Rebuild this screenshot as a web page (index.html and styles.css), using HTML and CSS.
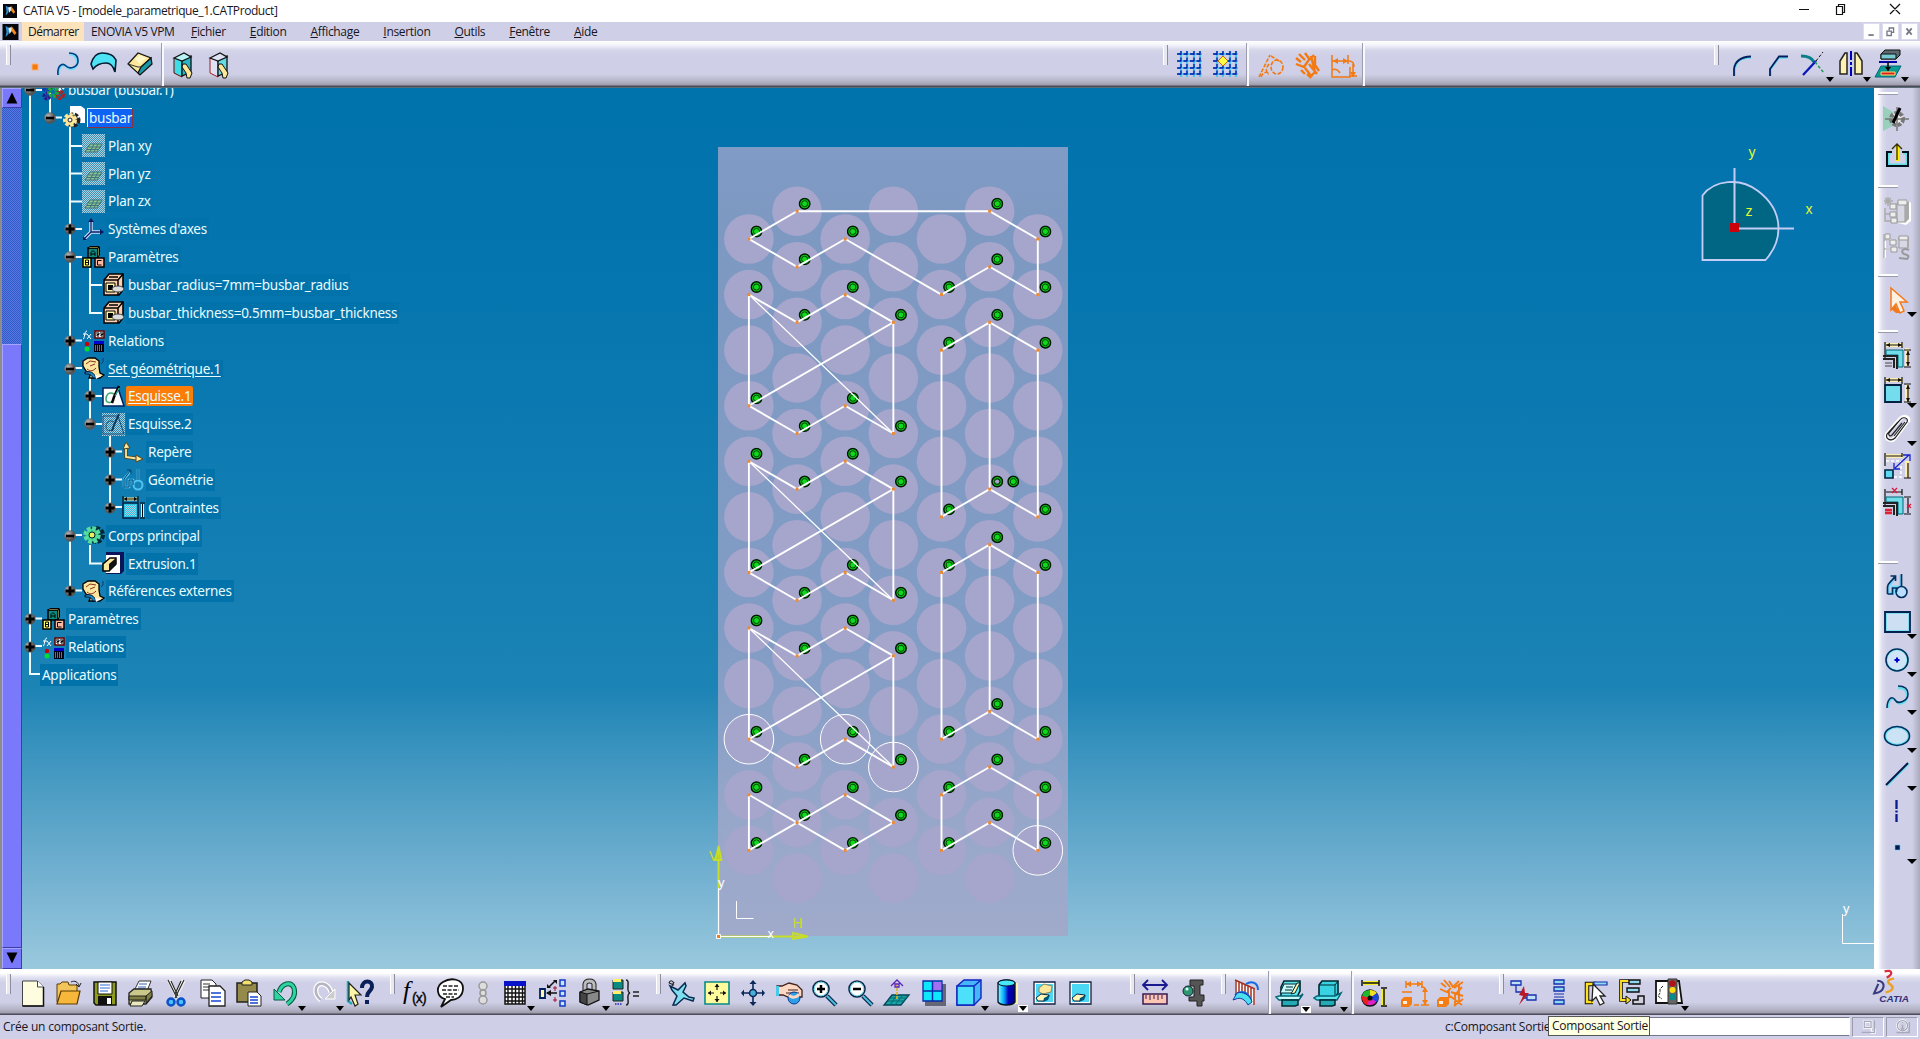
FILE: index.html
```html
<!DOCTYPE html>
<html lang="fr">
<head>
<meta charset="utf-8">
<title>CATIA V5 - [modele_parametrique_1.CATProduct]</title>
<link rel="stylesheet" href="styles.css">
</head>
<body>
<svg class="defs" aria-hidden="true">
  <defs>
    <pattern id="dither" width="2" height="2" patternUnits="userSpaceOnUse"><path d="M0 0h1v1H0zM1 1h1v1H1z" fill="#a9cfe0"/></pattern>
    <linearGradient id="blue" x1="0" x2="1"><stop offset="0" stop-color="#8ff"/><stop offset=".35" stop-color="#0af"/><stop offset=".6" stop-color="#00b"/><stop offset="1" stop-color="#008"/></linearGradient>
    <radialGradient id="ball" cx=".35" cy=".35"><stop offset="0" stop-color="#bbb"/><stop offset="1" stop-color="#555"/></radialGradient>
    <symbol id="logo" viewBox="0 0 16 16"><path fill="#05070d" d="M0 0h16v16H0z"/><path fill="#2d8fd0" d="M3 2l4 2-1 6-3 3 1-5z"/><path fill="#e8f0f0" d="M6 4l3-1 1 3-3 4z"/><path fill="#f08a20" d="M9 2l3 4 2 3-2 2-3-4z"/></symbol>
    <symbol id="minus" viewBox="0 0 12 12"><circle cx="6" cy="6" r="5.8" fill="url(#ball)"/><path d="M2 6h8" stroke="#000" stroke-width="2.6"/></symbol>
    <symbol id="plus" viewBox="0 0 12 12"><circle cx="6" cy="6" r="5.6" fill="url(#ball)"/><path d="M1.500 6h9M6 1.500v9" stroke="#000" stroke-width="2.800"/></symbol>
    <symbol id="plan" viewBox="0 0 23 23"><path fill="#3f93b0" d="M0 0h23v23H0z"/><path fill="url(#dither)" d="M0 0h23v23H0z"/><path fill="#86c795" stroke="#41707c" d="M8 10h12l-5 8H3z"/><path stroke="#41707c" d="M7 13h12M5 15.500h12M12 10l-4 8M16 10l-4 8"/></symbol>
    <symbol id="axes" viewBox="0 0 23 23"><path d="M9 2v12h11M9 14l-7 7" fill="none" stroke="#cfe6ff" stroke-width="3.400"/><path d="M9 2v12h12M9 14l-7 7" fill="none" stroke="#0a1a60" stroke-width="1.300"/><path fill="#0a1a60" d="M6 4l3-4 3 4zM18 11l4 3-4 3zM1 18v4h4z"/></symbol>
    <symbol id="blocks" viewBox="0 0 23 23"><path fill="#0a8a80" stroke="#000" stroke-width="1.500" d="M6 2h10v10H6z"/><path fill="#fe8" stroke="#000" d="M6 2l2-1.500h9L16 2zM16 2v9l1.500-2v-8z"/><path fill="#ff6" stroke="#000" stroke-width="1.500" d="M1 12h8v9H1z"/><path fill="#fcb9a0" stroke="#000" stroke-width="1.500" d="M13 12h9v9h-9z"/><path d="M9 10V6.500l2-2 2 2V10M9 8h4M3.500 14v5h3v-5zM3.500 16.500h3M19.500 14.500h-4V19h4" fill="none" stroke="#000"/></symbol>
    <symbol id="param" viewBox="0 0 23 23"><path fill="#fbd0b0" stroke="#000" stroke-width="1.600" d="M2 7l5-6h14v16l-4 5H2z"/><path d="M2 7h14v15M16 7l5-6M7 4h9" fill="none" stroke="#000" stroke-width="1.500"/><path fill="#fff6a0" stroke="#000" d="M4 10h9v9H4z"/><path fill="#000" d="M6 12h5v5H6z"/><ellipse cx="16" cy="16" rx="6" ry="3" fill="#ddd" stroke="#444"/></symbol>
    <symbol id="rel" viewBox="0 0 23 23"><path fill="none" stroke="#fff" d="M1 10c2 0 1-8 4-8M1 5h4M5 5l4 5M9 5l-4 5"/><path fill="#f7f3f3" stroke="#600" stroke-width="1.500" d="M13 2h9v7h-9z"/><path d="M14 4h3v1.500h-2V7h2M18 4h3v1.500h-2V7h2" stroke="#000" fill="none"/><circle cx="5" cy="15" r="2.200" fill="#c00"/><circle cx="5" cy="20" r="2.500" fill="#0d3"/><path fill="#00c" d="M12 12h10v3H12z"/><path fill="#001" d="M12 15h10v8H12z"/><path d="M13 17h8M13 19h8M13 21h8" stroke="#cde" stroke-dasharray="1 1"/></symbol>
    <symbol id="gset" viewBox="0 0 23 23"><path fill="#fbe6a0" stroke="#000" stroke-width="1.300" d="M1 4l5-3h7l4 3v6l1 6 4 2-4 3H7l2-5-5-2-3-5z"/><path d="M4 7l4-3 6 1M8 9l5-2M5 12c4 3 6 2 9-1" fill="none" stroke="#8a3020"/><path fill="#1a8ac0" stroke="#013" d="M3 15c5-1 9 0 11 6h-3c-2-4-4-4-8-4z"/><path d="M21 1v4l-2 2" stroke="#0a3a80" fill="none"/><path fill="#fff" d="M13 18l6 1-5 3z"/></symbol>
    <symbol id="sketch" viewBox="0 0 23 23"><path fill="#fff" stroke="#012060" stroke-width="1.500" d="M1 3h15l6 18H1z"/><path fill="none" stroke="#4a7" stroke-width="1.500" d="M12 9c-5-3-8 1-8 5s5 5 8 1"/><path d="M17 1l-5 11-2 6" stroke="#000" stroke-width="2.500" fill="none"/><path d="M17 3l-4 8" stroke="#3ca" stroke-width="1"/></symbol>
    <symbol id="profile" viewBox="0 0 23 26"><path fill="none" stroke="#7df" stroke-width="3" d="M3 20v-6l5-8M3 20h5v-6h4v5M15 2v12"/><circle cx="16" cy="19" r="5.500" fill="#bdf" stroke="#013060" stroke-width="1.600"/><path fill="none" stroke="#013060" stroke-width="1.700" d="M2 21v-7c0-4 4-5 7-10M5 3h5v5M2 21h5v-6h4v4M16 1v12"/></symbol>
    <symbol id="dims" viewBox="0 0 23 23"><path fill="#2fbfe0" stroke="#001a40" stroke-width="1.500" d="M1 7h15v15H1z"/><path fill="url(#dither)" d="M3 9h11v11H3z"/><path d="M2 3h13M20.500 8v13" stroke="#fe9" stroke-width="3"/><path d="M1 0v6M16 0v6M2 3h13M18 7h5M18 22h5M20.500 8v13" stroke="#000"/><path d="M5 1L2 3l3 2M12 1l3 2-3 2" fill="#000"/></symbol>
    <symbol id="node" viewBox="0 0 12 12"><circle cx="6" cy="6" r="5" fill="#0ac414" stroke="#001800" stroke-width="1.400"/><circle cx="6" cy="6" r="2.900" fill="#10d81c" stroke="#053a08" stroke-width=".9"/></symbol>
  </defs>
</svg>

<header class="titlebar">
  <svg class="applogo"><use href="#logo"/></svg>
  <span class="title">CATIA V5 - [modele_parametrique_1.CATProduct]</span>
  <svg class="winbtns" viewBox="0 0 110 22"><path d="M1 9.500h10M38.500 6.500h6v8h-6zM40.500 6V4.500h6v8h-2M92 4l10 10M102 4L92 14" fill="none" stroke="#111" stroke-width="1.200"/></svg>
</header>

<nav class="menubar">
  <svg class="menulogo"><use href="#logo"/></svg>
  <span class="menu active">Démarrer</span>
  <span class="menu enovia">ENOVIA V5 VPM</span>
  <span class="menu"><u>F</u>ichier</span>
  <span class="menu"><u>E</u>dition</span>
  <span class="menu"><u>A</u>ffichage</span>
  <span class="menu"><u>I</u>nsertion</span>
  <span class="menu"><u>O</u>utils</span>
  <span class="menu"><u>F</u>enêtre</span>
  <span class="menu"><u>A</u>ide</span>
  <span class="docbtns">
    <svg viewBox="0 0 17 17"><path d="M5 12.500h6" stroke="#778" stroke-width="2"/></svg>
    <svg viewBox="0 0 17 17"><path d="M4.500 8h5v5h-5zM7 7V4.500h5v5h-2" fill="none" stroke="#778" stroke-width="1.500"/></svg>
    <svg viewBox="0 0 17 17"><path d="M5 5l6 7M11 5l-6 7" stroke="#778" stroke-width="2"/></svg>
  </span>
</nav>

<div class="toolbar top">
  <div class="group grip lead">
    <i class="tool"><svg viewBox="0 0 30 30"><path fill="#f47a10" stroke="#fbb070" d="M12 15h6v6h-6z"/></svg></i>
    <i class="tool m2"><svg viewBox="0 0 30 30"><path fill="none" stroke="#7df" stroke-width="2.500" d="M6 26c-1-9 4-12 8-8s11 1 10-5-3-8-8-8"/><path fill="none" stroke="#014080" stroke-width="1.600" d="M5 26c-1-9 4-13 8-9s12 1 12-5-4-8-9-8"/></svg></i>
    <i class="tool"><svg viewBox="0 0 30 30"><path fill="#4de3f5" stroke="#001a30" stroke-width="1.600" d="M2 15C4 8 7 4 13 4s12 2 14 7l-1 12c-2-7-5-9-9-9s-9 1-13 6z"/></svg></i>
    <i class="tool"><svg viewBox="0 0 30 30"><path fill="#fde79a" stroke="#111" stroke-width="1.200" d="M3 15L13 4l13 5-10 9-2 7z"/><path fill="#fff8c8" d="M10 10l5-4 6 3-6 6z"/><path fill="#1b98a8" stroke="#111" stroke-width="1.200" d="M16 18L26 9l1 6-12 11-2-2z"/><path d="M3 15l10 3 3 0" fill="none" stroke="#333"/></svg></i>
  </div>
  <div class="group sep">
    <i class="tool"><svg viewBox="0 0 30 30"><path fill="#3fdbe6" stroke="#700" d="M6 8v15l8 4V10z"/><path fill="#2ab5c5" stroke="#111" stroke-width="1.300" d="M14 10v16l9-4V6z"/><path fill="#b8f4f8" stroke="#111" stroke-width="1.300" d="M6 8l10-5 7 4-9 4z"/><path fill="#fde79a" stroke="#111" d="M15 14l3 0 6 9-2 5-3 0-1-5-4-6z"/></svg></i>
    <i class="tool"><svg viewBox="0 0 30 30"><path fill="#dfe2f4" stroke="#a02020" d="M6 8v15l8 4V10z"/><path fill="#65dbe5" stroke="#111" stroke-width="1.300" d="M14 10v16l9-4V6z"/><path fill="#dfe2f4" stroke="#111" stroke-width="1.300" d="M6 8l10-5 7 4-9 4z"/><path fill="#fde79a" stroke="#111" d="M15 14l3 0 6 9-2 5-3 0-1-5-4-6z"/></svg></i>
  </div>
  <div class="group grip gridset">
    <i class="tool"><svg viewBox="0 0 30 30"><path d="M3 5h24M3 12h24M3 19h24M3 25h24M6 2v26M12 2v26M19 2v26M25 2v26" stroke="#52c5ee" stroke-width="2.200"/><path d="M2 5h26M2 12h26M2 19h26M2 25h26M6 2v26M12 2v26M19 2v26M25 2v26" stroke="#0614a8" stroke-width="1.300" stroke-dasharray="4 2.500"/></svg></i>
    <i class="tool"><svg viewBox="0 0 30 30"><path d="M3 5h24M3 12h24M3 19h24M3 25h24M6 2v26M12 2v26M19 2v26M25 2v26" stroke="#52c5ee" stroke-width="2.200"/><path d="M2 5h26M2 12h26M2 19h26M2 25h26M6 2v26M12 2v26M19 2v26M25 2v26" stroke="#0614a8" stroke-width="1.300" stroke-dasharray="4 2.500"/><path fill="#ff4" stroke="#c60" d="M12 7l5 5-5 5-5-5z"/></svg></i>
  </div>
  <div class="group sep orange">
    <i class="tool"><svg viewBox="0 0 30 30"><g fill="none" stroke="#f37a12" stroke-width="1.600" stroke-dasharray="4 1.500"><path d="M2 27L13 5M14 6l8 5"/><ellipse cx="20" cy="17" rx="6" ry="7"/><path d="M4 27c2-5 6-6 8-3M12 14c-4 5-3 9 0 10"/></g></svg></i>
    <i class="tool"><svg viewBox="0 0 30 30"><path d="M3 8l5 4M6 4l6 6M12 3l5 7M3 14l8 3 4-6 6-6M8 20l4 4M12 18l7 9M16 14l8 10M20 12l6 9M22 6v8M14 24l4 4M18 6l4 16-5 5" fill="none" stroke="#f37a12" stroke-width="2.400"/></svg></i>
    <i class="tool m1"><svg viewBox="0 0 30 30"><path d="M4 5v22h18V17M4 20c4-2 6 0 8 3M4 11h17M20 5v9M25 12v15M21 26h8M21 11c4 0 5 3 5 6" fill="none" stroke="#f37a12" stroke-width="1.500"/><path fill="#f37a12" d="M5 11l5-3v6zM20 11l-5-3v6zM25 27l-3-5h6z"/></svg></i>
  </div>
  <div class="group sep empty"></div>
  <div class="group grip ops">
    <i class="tool"><svg viewBox="0 0 30 30"><path d="M7 27V21C8 13 12 9 23 9" fill="none" stroke="#6de" stroke-width="1.500"/><path d="M6 27V20C7 12 12 8 23 7.500" fill="none" stroke="#012060" stroke-width="1.800"/></svg></i>
    <i class="tool"><svg viewBox="0 0 30 30"><path d="M7 27V20L15 9h8" fill="none" stroke="#6de" stroke-width="1.500"/><path d="M6 27V20L15 7.500h9" fill="none" stroke="#012060" stroke-width="1.800"/></svg></i>
    <i class="tool drop m1"><svg viewBox="0 0 30 30"><path d="M2 7c6 0 11 2 13 6" fill="none" stroke="#087f88" stroke-width="3"/><path d="M4 26L17 12" stroke="#0818b8" stroke-width="2.300"/><path d="M17 12l7-9" stroke="#111" stroke-dasharray="3 2"/><path d="M16 13l9 11" stroke="#295" stroke-width="1.500" stroke-dasharray="3 2"/></svg></i>
    <i class="tool drop p1"><svg viewBox="0 0 30 30"><path d="M4 25V12l5-8h2v21zM26 25V12l-5-8h-2v21z" fill="#fdf2b0" stroke="#222" stroke-width="1.500"/><path d="M15 2v26" stroke="#00b" stroke-width="2" stroke-dasharray="9 2 3 2"/></svg></i>
    <i class="tool drop p2"><svg viewBox="0 0 30 30"><path fill="#5d6b70" stroke="#111" d="M7 5l4-4h15v5l-4 4H7z"/><path fill="#78c8d0" stroke="#111" d="M7 5h15v5H7z"/><path d="M5 13h18" stroke="#00a" stroke-width="2"/><path fill="#0a9a94" stroke="#067" d="M7 17h20l-6 11H1z"/><path d="M14 13v9" stroke="#000" stroke-width="1.500"/><path fill="#000" d="M11 18h6l-3 4z"/><path fill="#d22" stroke="#fd6" d="M7 23h14v3H7z"/></svg></i>
  </div>
</div>

<main class="work">
  <div class="scroll">
    <div class="sbtn"><svg viewBox="0 0 20 20"><path d="M10 4l6 12H4z"/></svg></div>
    <div class="track"></div>
    <div class="thumb"></div>
    <div class="sbtn"><svg viewBox="0 0 20 20"><path d="M10 16l6-12H4z"/></svg></div>
  </div>
  <section class="canvas">
    <svg class="scene" viewBox="22 88 1852 881">
      <defs><linearGradient id="plate" x1="0" y1="0" x2="0" y2="1"><stop offset="0" stop-color="#809bc5"/><stop offset=".1" stop-color="#7d99c2"/><stop offset=".62" stop-color="#819cc5"/><stop offset=".88" stop-color="#99a8ca"/><stop offset="1" stop-color="#a0aacb"/></linearGradient></defs>
      <path fill="url(#plate)" d="M718 147h350v789H718z"/>
      <g id="holes" fill="#a6a5cb"></g>
      <g id="marks"></g>
      <g id="wires" fill="none" stroke="#fff" stroke-width="1.900"></g>
      <g id="points" fill="#e88a38"></g>
      <g id="rings" fill="none" stroke="#fff"></g>
      <g fill="none">
        <path d="M718.500 936V848M718 936.500h88" stroke="#c8dc28" stroke-width="2"/>
        <path d="M718.500 846l3 14h-6zM808 936.500l-15-3.500v6z" stroke="#c8dc28" stroke-width="1.800"/>
        <path d="M718.500 936V888M718 936.500h53M736.500 901v17.500h17M1842.500 914v29.500h32" stroke="#fff"/>
      </g>
      <path d="M716.500 934.500h4v4h-4z" fill="#f47a20" stroke="#fff"/>
      <g class="axis"><text x="792.500" y="928">H</text><text x="709" y="861">V</text></g>
      <g class="axis white"><text x="718" y="887">y</text><text x="767.500" y="938">x</text><text x="1843" y="913">y</text></g>
      <path d="M1702.500 195.500C1714 180 1740 177 1758 191C1786 212 1782 242 1765.500 260H1702.500z" fill="#006683" stroke="#c3cdf5" stroke-width="1.800"/>
      <path d="M1734.500 168v60M1734 228.500h60" stroke="#c3cdf5" stroke-width="2" fill="none"/>
      <path d="M1730 223h9v9h-9z" fill="#cc0008"/>
      <g class="compass"><text x="1748.500" y="157">y</text><text x="1805.500" y="214">x</text><text x="1745.500" y="216">z</text></g>
    </svg>

    <div class="tree">
      <svg class="branches" viewBox="22 76 420 614"><g fill="none" stroke="#f1fbff" stroke-width="2">
        <path d="M30 90V674h13M50 92v26M70 124V591M90 268v45h12M90 376v48M110 432v76M90 545v18.500h12"/>
        <path d="M30 90h12M50 117.500h12M70 146h12M70 173.500h12M70 201.500h12M70 229h12M70 257h12M90 285h12M70 340.500h12M70 368h12M90 396h12M90 424h12M110 451.500h12M110 479.500h12M110 507h12M70 535h12M70 590.500h12M30 618.500h12M30 646h12"/></g></svg>
      <div class="row d0"><svg class="tg"><use href="#minus"/></svg><svg class="ic" viewBox="0 0 23 23"><g fill="none" stroke-width="4" stroke-dasharray="2.500 1"><circle cx="5" cy="9" r="3.500" stroke="#1438b0"/><circle cx="18" cy="8" r="3" stroke="#f4f4ff"/><circle cx="18" cy="17" r="3" stroke="#b02020"/><circle cx="5" cy="18" r="2.500" stroke="#2a1a90"/><circle cx="11" cy="14" r="4" stroke="#1ea53a"/></g></svg><span>busbar (busbar.1)</span></div>
      <div class="row d1"><svg class="tg"><use href="#minus"/></svg><svg class="ic" viewBox="0 0 23 23"><path fill="#fff" d="M8 0h11l4 3v14H8z"/><circle cx="11" cy="14" r="5.500" fill="#888" stroke="#222" stroke-width="4" stroke-dasharray="3 1.500"/><circle cx="8" cy="14" r="5" fill="#fde79a" stroke="#fde79a" stroke-width="4" stroke-dasharray="3 1.500"/><circle cx="8" cy="14" r="2" fill="#fff" stroke="#222"/></svg><span class="edit">busbar</span></div>
      <div class="row d2 leaf"><svg class="ic"><use href="#plan"/></svg><span>Plan xy</span></div>
      <div class="row d2 leaf"><svg class="ic"><use href="#plan"/></svg><span>Plan yz</span></div>
      <div class="row d2 leaf"><svg class="ic"><use href="#plan"/></svg><span>Plan zx</span></div>
      <div class="row d2"><svg class="tg"><use href="#plus"/></svg><svg class="ic"><use href="#axes"/></svg><span>Systèmes d'axes</span></div>
      <div class="row d2"><svg class="tg"><use href="#minus"/></svg><svg class="ic"><use href="#blocks"/></svg><span>Paramètres</span></div>
      <div class="row d3 leaf"><svg class="ic"><use href="#param"/></svg><span>busbar_radius=7mm=busbar_radius</span></div>
      <div class="row d3 leaf"><svg class="ic"><use href="#param"/></svg><span>busbar_thickness=0.5mm=busbar_thickness</span></div>
      <div class="row d2"><svg class="tg"><use href="#plus"/></svg><svg class="ic"><use href="#rel"/></svg><span>Relations</span></div>
      <div class="row d2"><svg class="tg"><use href="#minus"/></svg><svg class="ic"><use href="#gset"/></svg><span class="under">Set géométrique.1</span></div>
      <div class="row d3"><svg class="tg"><use href="#plus"/></svg><svg class="ic"><use href="#sketch"/></svg><span class="under hot">Esquisse.1</span></div>
      <div class="row d3"><svg class="tg"><use href="#minus"/></svg><svg class="ic" viewBox="0 0 23 23"><path fill="#2a86ad" d="M0 0h23v23H0z"/><path fill="url(#dither)" d="M0 0h23v23H0z"/><path fill="none" stroke="#1b4f7c" d="M1 3h15l6 18H1zM12 9c-5-3-8 1-8 5s5 5 8 1"/><path d="M17 1l-5 11-2 6" stroke="#10385c" stroke-width="2" fill="none"/></svg><span>Esquisse.2</span></div>
      <div class="row d4"><svg class="tg"><use href="#plus"/></svg><svg class="ic" viewBox="0 0 23 23"><path d="M4 3v13l14 2" fill="none" stroke="#542" stroke-width="3.500"/><path d="M4 3v13l14 2" fill="none" stroke="#fde79a" stroke-width="1.800"/><path fill="#fde79a" stroke="#542" d="M1 8l3-7 4 6zM14 14l7 4-7 3z"/></svg><span>Repère</span></div>
      <div class="row d4"><svg class="tg"><use href="#plus"/></svg><svg class="ic" viewBox="0 0 23 23"><path fill="none" stroke="#4fc4f0" stroke-width="2.600" d="M2 19v-8l6-7M2 19h5v-7h4v5M16 1v11"/><circle cx="16" cy="17" r="4.500" fill="#1583b6" stroke="#4fc4f0" stroke-width="2"/><path fill="none" stroke="#03406f" d="M2 19v-8l6-8M5 2h4v4M2 19h5v-7h4v5M16 1v11"/></svg><span>Géométrie</span></div>
      <div class="row d4"><svg class="tg"><use href="#plus"/></svg><svg class="ic"><use href="#dims"/></svg><span>Contraintes</span></div>
      <div class="row d2"><svg class="tg"><use href="#minus"/></svg><svg class="ic" viewBox="0 0 23 23"><circle cx="14" cy="11" r="6.500" fill="#0a4a50" stroke="#012a38" stroke-width="5" stroke-dasharray="3.500 1.500"/><circle cx="10" cy="11" r="6.500" fill="#3ecf8a" stroke="#58dca0" stroke-width="4.500" stroke-dasharray="3.500 1.500"/><circle cx="10" cy="11" r="3" fill="#e8f060" stroke="#023"/></svg><span>Corps principal</span></div>
      <div class="row d3 leaf"><svg class="ic" viewBox="0 0 23 23"><path fill="#0a1458" d="M4 0h18v19l-3 3H4z"/><path fill="#fff" d="M4 3h14v18H4z"/><path fill="#fde79a" stroke="#000" stroke-width="1.500" d="M1 12l7-6h6v6l-7 7H1z"/><path fill="#111" d="M7 12l7-6v7l-7 6z"/></svg><span>Extrusion.1</span></div>
      <div class="row d2"><svg class="tg"><use href="#plus"/></svg><svg class="ic"><use href="#gset"/></svg><span>Références externes</span></div>
      <div class="row d0"><svg class="tg"><use href="#plus"/></svg><svg class="ic"><use href="#blocks"/></svg><span>Paramètres</span></div>
      <div class="row d0"><svg class="tg"><use href="#plus"/></svg><svg class="ic"><use href="#rel"/></svg><span>Relations</span></div>
      <div class="row d0 bare"><span>Applications</span></div>
    </div>
  </section>

  <aside class="side">
    <div class="vgroup g1">
      <i class="tool"><svg viewBox="0 0 30 30"><path fill="#98d0bb" d="M1 2l10 6v14L1 27z"/><circle cx="15" cy="15" r="6" fill="#eee" stroke="#777" stroke-width="4" stroke-dasharray="3.500 1.500"/><path d="M15 3v24M3 15h24" stroke="#777" stroke-width="1.500"/><path d="M18 4l-7 15" stroke="#000" stroke-width="3"/></svg></i>
      <i class="tool"><svg viewBox="0 0 30 30"><path d="M9 13H6v12h19V13h-4" fill="none" stroke="#5fe0e8" stroke-width="3"/><path d="M10 12H5v14h21V12h-6" fill="none" stroke="#001018" stroke-width="2"/><path d="M15 5v16" stroke="#fe0" stroke-width="4"/><path d="M15 4v16M10 9l5-5 5 5" fill="none" stroke="#332c00" stroke-width="1.300"/></svg></i>
    </div>
    <div class="vgroup g2">
      <i class="tool"><svg viewBox="0 0 30 30"><path fill="#fff" d="M16 6l9-2 4 3v18l-5 4-8-2z"/><path fill="#d8d8e4" stroke="#999" d="M15 7h8v19h-8z"/><path fill="#aaa" d="M23 7l4-2v18l-4 4z"/><path d="M6 1v9M2 5h9M3 2l6 6M9 2L3 8M3 12v13h6M3 18h5" stroke="#aaa" stroke-width="1.500" fill="none"/><path fill="#eee" stroke="#999" d="M8 8h6v5H8zM8 16h6v5H8zM9 22h6v5H9zM16 4h9v5h-9z"/></svg></i>
      <i class="tool"><svg viewBox="0 0 30 30"><path fill="#d8d8e4" stroke="#999" d="M17 5h9v11h-9z"/><path fill="#aaa" d="M25 5h2v10h-2z"/><path d="M3 2v24M3 8h6M3 17h7" stroke="#fff" stroke-width="2"/><path d="M2 2v24M2 8h6M2 17h7" stroke="#999" fill="none"/><path fill="#eee" stroke="#999" d="M3 2h5v5H3zM8 8h6v5H8zM9 15h6v5H9zM17 4h9v4h-9z"/><path d="M27 18c-6-3-9 2-5 4 4 1 6 2 3 5l-8-1" fill="none" stroke="#999" stroke-width="2"/></svg></i>
    </div>
    <div class="vgroup g3">
      <i class="tool drop"><svg viewBox="0 0 30 30"><path fill="#fff1e2" stroke="#f27a1c" stroke-width="1.500" d="M9 3l16 14h-7l4 9-4 2-4-9-5 6z"/><path fill="#f27a1c" d="M9 24l4-4 5 8h-4z"/></svg></i>
    </div>
    <div class="vgroup g4">
      <i class="tool"><svg viewBox="0 0 30 30"><path d="M4 5h17M25 8v18" stroke="#fdeeb0" stroke-width="4"/><path d="M3 2v16M20 2v6M4 5h16M22 10h7M22 27h7M26 11v15" stroke="#111" stroke-width="1.200"/><path fill="#111" d="M8 3L4 5l4 2M16 3l4 2-4 2M24 15l2-4 2 4M24 22l2 4 2-4"/><path fill="#72dce8" stroke="#067" d="M4 10h17v17h-5V15H4z"/><path d="M1 16h14v13M1 19h11v9" fill="none" stroke="#222" stroke-width="2"/><path d="M3 23h7M3 26h7" stroke="#777" stroke-width="1.500"/></svg></i>
      <i class="tool drop"><svg viewBox="0 0 30 30"><path d="M4 4h17M25 9v17" stroke="#fdeeb0" stroke-width="4"/><path d="M3 1v7M20 1v7M4 4h16M22 8h7M22 26h7M26 9v17" stroke="#111" stroke-width="1.200"/><path fill="#111" d="M8 2L4 4l4 2M16 2l4 2-4 2M24 13l2-4 2 4M24 22l2 4 2-4"/><path fill="#73dced" stroke="#012040" stroke-width="1.800" d="M3 9h16v17H3z"/></svg></i>
      <i class="tool drop p2"><svg viewBox="0 0 30 30"><path d="M25 8L13 24c-3 4-10 2-8-4L18 5c4-4 10-2 8 3" fill="none" stroke="#fff" stroke-width="4"/><path d="M20 9L10 21c-2 2-4 0-3-2L18 6c3-4 9-2 7 2L13 24c-4 4-10 1-8-4L16 8M23 8L12 22" fill="none" stroke="#222" stroke-width="1.200"/></svg></i>
      <i class="tool p1"><svg viewBox="0 0 30 30"><path d="M4 5h17M25 10v17" stroke="#fdeeb0" stroke-width="4"/><path d="M3 2v13M20 2v4M4 5h16M22 27h7M26 12v15" stroke="#111" stroke-width="1.200"/><path d="M4 10h15v16h-8" fill="none" stroke="#fff" stroke-width="1.600" stroke-dasharray="3 2"/><path fill="#5ad8ee" stroke="#012040" stroke-width="1.600" d="M3 19h8v8H3z"/><path d="M13 17L27 4M21 4h7v6M12 12v6h6" fill="none" stroke="#1826c8" stroke-width="1.300"/></svg></i>
      <i class="tool"><svg viewBox="0 0 30 30"><path d="M3 2v16M20 2v6M4 5h16M22 10h7M22 27h7M26 11v15" stroke="#111" stroke-width="1.200"/><path fill="#72dce8" stroke="#067" d="M4 10h17v17h-5V15H4z"/><path d="M1 16h14v13M1 19h11v9" fill="none" stroke="#222" stroke-width="2"/><path d="M3 23h7M3 26h7" stroke="#e02030" stroke-width="2.500"/><path d="M10 1l5 5M15 1l-5 5M25 17l4 4M29 17l-4 4" stroke="#d81838" stroke-width="1.200"/></svg></i>
    </div>
    <div class="vgroup g5">
      <i class="tool"><svg viewBox="-3.500 -2 30 30"><use href="#profile" width="23" height="26"/></svg></i>
      <i class="tool drop"><svg viewBox="0 0 30 30"><path fill="#cddff2" stroke="#7fdff0" stroke-width="2" d="M4 6h23v18H4z"/><path fill="none" stroke="#012050" stroke-width="1.800" d="M3 5h25v20H3z"/></svg></i>
      <i class="tool drop p2"><svg viewBox="0 0 30 30"><circle cx="15" cy="15" r="10.500" fill="#cfe4f6" stroke="#8ee" stroke-width="2"/><circle cx="15" cy="15" r="11" fill="none" stroke="#013060" stroke-width="1.600"/><path d="M12.500 15h5M15 12.500v5" stroke="#00c" stroke-width="2"/></svg></i>
      <i class="tool drop p2"><svg viewBox="0 0 30 30"><path fill="none" stroke="#6de" stroke-width="2.300" d="M6 25c0-9 5-12 8-7s11 2 11-5-4-8-9-8"/><path fill="none" stroke="#013060" stroke-width="1.500" d="M5 25c0-9 5-13 8-8s13 1 13-6-5-8-10-8"/></svg></i>
      <i class="tool drop p2"><svg viewBox="0 0 30 30"><ellipse cx="15" cy="15" rx="12" ry="9" fill="#cce3f5" stroke="#6de" stroke-width="2.500"/><ellipse cx="15" cy="15" rx="12.500" ry="9.500" fill="none" stroke="#013060" stroke-width="1.600"/></svg></i>
      <i class="tool drop p2"><svg viewBox="0 0 30 30"><path d="M5 27L27 5" stroke="#6de" stroke-width="1.500"/><path d="M4 26L26 4" stroke="#011848" stroke-width="1.900"/></svg></i>
      <i class="tool p1"><svg viewBox="0 0 30 30"><path d="M14.500 4v22" stroke="#0a1a90" stroke-width="2.300" stroke-dasharray="9 1.500 2 1.500"/></svg></i>
      <i class="tool drop"><svg viewBox="0 0 30 30"><path fill="#011848" stroke="#6cf" stroke-width=".6" d="M13 13h5v5h-5z"/></svg></i>
    </div>
  </aside>
</main>

<div class="toolbar bottom">
  <div class="group grip lead">
    <i class="tool"><svg viewBox="0 0 30 30"><path fill="#fffde0" stroke="#444" d="M4.500 3h15l6 6v19h-21z"/><path fill="#fff" stroke="#444" d="M19.500 3v6h6"/><path d="M25.500 9v19h-21" fill="none" stroke="#111" stroke-width="1.500"/></svg></i>
    <i class="tool"><svg viewBox="0 0 30 30"><path fill="#f3c45a" stroke="#5a3a00" d="M3 24V6h3l2-2h6l1 3h8v7"/><path fill="#f6b73a" stroke="#5a3a00" stroke-width="1.200" d="M3 26l4-13h19l-3 13z"/><path d="M17 4c4-2 7 0 8 4M22 6l3 3 2-4" fill="none" stroke="#222"/></svg></i>
    <i class="tool"><svg viewBox="0 0 30 30"><path fill="#8d9a1c" stroke="#111" stroke-width="1.500" d="M4 4h22v23H6l-2-2z"/><path fill="#fff" stroke="#111" d="M8 4h14v12H8z"/><path d="M10 7h10M10 10h10M10 13h8" stroke="#2a6ad8"/><path fill="#111" d="M8 18h14v9H8z"/><path fill="#fff" d="M17 20h4v6h-4z"/></svg></i>
    <i class="tool"><svg viewBox="0 0 30 30"><path fill="#fff" stroke="#333" d="M8 13l5-10h12l-4 10z"/><path d="M13 6h8M12 9h8M11 11h8" stroke="#36b"/><path fill="#c9c78a" stroke="#222" stroke-width="1.300" d="M3 15l5-4h17l1 8-6 7H3z"/><path fill="#807e40" stroke="#222" d="M3 18h17v4H3zM20 18l6-5v5l-6 7z"/><path fill="#e9e8c0" stroke="#222" d="M6 23h13l-3 5H4z"/></svg></i>
    <i class="tool m1"><svg viewBox="0 0 30 30"><path d="M8 2l9 18M23 2l-9 18" stroke="#eee" stroke-width="4"/><path d="M7 2l9 18M10 3l7 15M23 2l-9 18M20 3l-6 13" stroke="#222" stroke-width="1.100"/><circle cx="10" cy="24" r="3.500" fill="#4ac0ff" stroke="#0a52c8" stroke-width="2.500"/><circle cx="20" cy="24" r="3.500" fill="#4ac0ff" stroke="#0a52c8" stroke-width="2.500"/></svg></i>
    <i class="tool p1"><svg viewBox="0 0 30 30"><path fill="#fff" stroke="#222" d="M3 2h11l4 4v14H3z"/><path d="M5 6h7M5 9h9M5 12h7" stroke="#333"/><path fill="#fff" stroke="#222" stroke-width="1.300" d="M11 8h11l5 5v15H11z"/><path d="M13 15h10M13 19h10M13 23h10" stroke="#1446d0" stroke-width="1.600"/></svg></i>
    <i class="tool"><svg viewBox="0 0 30 30"><path fill="#948a4a" stroke="#222" stroke-width="1.500" d="M3 5h20v19H3z"/><path fill="#f2df6c" stroke="#222" d="M8 7V4l3-2h4l3 2v3z"/><path fill="#fff" stroke="#222" d="M14 14h9l4 4v10H14z"/><path d="M16 19h8M16 22h8M16 25h8" stroke="#1446d0" stroke-width="1.500"/></svg></i>
    <i class="tool drop p1"><svg viewBox="0 0 30 30"><path d="M8 14c3-9 12-11 15-4 2 7-1 12-7 16" fill="none" stroke="#075a42" stroke-width="5"/><path d="M8 14c3-9 12-11 15-4 2 7-1 12-7 16" fill="none" stroke="#2fd5a0" stroke-width="3"/><path fill="#2fd5a0" stroke="#075a42" d="M3 11v11h11z"/></svg></i>
    <i class="tool drop p2"><svg viewBox="0 0 30 30"><path d="M22 14C19 5 10 3 7 10c-1 5 1 9 5 12" fill="none" stroke="#fff" stroke-width="5"/><path d="M22 14C19 5 10 3 7 10c-1 5 1 9 5 12" fill="none" stroke="#b4b4c2" stroke-width="2.500"/><path fill="#ccc" stroke="#fff" d="M26 11v10H16z"/></svg></i>
    <i class="tool"><svg viewBox="0 0 30 30"><path d="M3 3v20l4 3" stroke="#24a9bb" stroke-width="2.500" fill="none"/><path fill="#fff7a8" stroke="#222" stroke-width="1.200" d="M4 5l12 12h-6l3 9-3 2-4-9-2 3z"/><path d="M17 10c0-9 11-8 10-1-1 5-5 4-5 10" fill="none" stroke="#0b2058" stroke-width="4"/><path fill="#0b2058" d="M20 22h4v4h-4z"/></svg></i>
  </div>
  <div class="group grip">
    <i class="tool"><svg viewBox="0 0 30 30"><text class="fx" x="3" y="21">f</text><text class="fxs" x="12" y="25">(x)</text></svg></i>
    <i class="tool"><svg viewBox="0 0 30 30"><path fill="#fff" stroke="#111" stroke-width="1.800" d="M9 21C1 19-1 9 7 4s20-3 20 6-7 12-12 12l-10 7 4-8z"/><path d="M7 8h15M6 12h17M7 16h14M10 19h8" stroke="#222" stroke-width="1.500" stroke-dasharray="4 1.500"/></svg></i>
    <i class="tool m4"><svg viewBox="0 0 30 30"><g fill="#ddd" stroke="#999" stroke-width="1.500"><circle cx="15" cy="8" r="4"/><circle cx="15" cy="15" r="3"/><circle cx="15" cy="22" r="4"/></g></svg></i>
    <i class="tool drop m4"><svg viewBox="0 0 30 30"><path fill="#fff" stroke="#111" stroke-width="1.500" d="M5 4h20v22H5z"/><path fill="#0812c8" d="M4 3h22v5H4z"/><path d="M5 11h20M5 15h20M5 19h20M5 23h20M8 8v18M12 8v18M15.500 8v18M19 8v18M22.500 8v18" stroke="#111" stroke-width="1.400"/></svg></i>
    <i class="tool p2"><svg viewBox="0 0 30 30"><path fill="#fff6b0" stroke="#012060" stroke-width="1.800" d="M2 11h5v9H2z"/><path fill="#cde6ff" stroke="#1238c8" stroke-width="1.500" d="M22 2h5v6h-5zM22 13h5v5h-5zM22 23h5v5h-5z"/><path d="M9 15h10M11 9l6-6" stroke="#111" stroke-width="1.500"/><path d="M8 15l5-3v6zM19 2l-4 0 4 4zM9 10V6l4 4z" fill="#111"/><path d="M17 8v5M15 10h4M17 19v5M15 22h4" stroke="#a01030"/></svg></i>
    <i class="tool drop p1"><svg viewBox="0 0 30 30"><path d="M10 14V6c1-4 8-4 9 0v9" fill="none" stroke="#222" stroke-width="5"/><path d="M10 14V6c1-4 8-4 9 0v9" fill="none" stroke="#bbb" stroke-width="3"/><path fill="#888" stroke="#111" stroke-width="1.300" d="M5 14l8-3 11 2v9l-11 5-8-3z"/><path fill="#444" stroke="#111" d="M5 14l7 2v11l-7-3z"/><path d="M12 16l12-3" stroke="#111"/></svg></i>
    <i class="tool m1"><svg viewBox="0 0 30 30"><path fill="#0a8a80" stroke="#222" d="M3 2h10v9H3zM3 14h10v9H3z"/><path fill="#fe6" d="M3 1h8v3H3zM3 13h8v3H3z"/><path d="M5 26h7" stroke="#22b" stroke-width="1.500" stroke-dasharray="1.500 1"/><path d="M16 2c5 0-1 12 4 13-5 1 1 12-4 12M23 14h6M23 18h6" fill="none" stroke="#222" stroke-width="1.500"/></svg></i>
  </div>
  <div class="group grip">
    <i class="tool"><svg viewBox="0 0 30 30"><path fill="#7fdff0" stroke="#082a50" stroke-width="1.500" d="M4 8l8 4 7-7 1 3-3 6 6 5 5 1-1 3-9-3-8 7h-3l4-9-5-6z"/><path d="M3 5c1-3 3-3 5 0M3 5l5 2M8 4l-2 4" stroke="#222" stroke-width="1.200" fill="none"/></svg></i>
    <i class="tool"><svg viewBox="0 0 30 30"><path fill="#fdfb9c" stroke="#078a88" stroke-width="1.600" d="M3 4h24v22H3z"/><path d="M15 6v6M15 18v6M6 15h6M18 15h6" stroke="#111" stroke-width="1.200"/><path fill="#111" d="M12.500 9h5L15 6zM12.500 21h5L15 24zM9 12.500v5L6 15zM21 12.500v5l3-2.500z"/></svg></i>
    <i class="tool"><svg viewBox="0 0 30 30"><path d="M15 4v22M4 15h22" stroke="#0a2858" stroke-width="1.600"/><path fill="#0a2858" d="M11.500 6h7L15 2zM11.500 24h7L15 28zM6 11.500v7L3 15zM24 11.500v7l3-3.500z"/><circle cx="15" cy="15" r="3.500" fill="#48b0d8" stroke="#0a2858" stroke-width="1.500"/></svg></i>
    <i class="tool"><svg viewBox="0 0 30 30"><path fill="#fcd8c4" stroke="#40201a" stroke-width="1.300" d="M3 8h5l7-3 8 2 5 5v7H14l-5-2H3z"/><path fill="#4ac8e8" d="M2 8h3v10H2z"/><path d="M14 12h10M12 15h13" stroke="#40201a"/><circle cx="20" cy="20" r="6" fill="#2d9fe8" stroke="#0a3a90"/><path d="M15 17c2 3 8 3 10-1" stroke="#fcd8c4" fill="none" stroke-width="3"/></svg></i>
    <i class="tool"><svg viewBox="0 0 30 30"><path d="M17 18l9 9" stroke="#0a2848" stroke-width="4.500"/><path d="M17 18l9 9" stroke="#4ac0e0" stroke-width="2"/><circle cx="11" cy="11" r="8" fill="#fff" stroke="#0a2848" stroke-width="1.600"/><circle cx="11" cy="11" r="6.800" fill="none" stroke="#6cd4e8"/><path d="M11 7v8M7 11h8" stroke="#000" stroke-width="2.500"/></svg></i>
    <i class="tool"><svg viewBox="0 0 30 30"><path d="M17 18l9 9" stroke="#0a2848" stroke-width="4.500"/><path d="M17 18l9 9" stroke="#4ac0e0" stroke-width="2"/><circle cx="11" cy="11" r="8" fill="#fff" stroke="#0a2848" stroke-width="1.600"/><circle cx="11" cy="11" r="6.800" fill="none" stroke="#6cd4e8"/><path d="M7 11h8" stroke="#000" stroke-width="2.500"/></svg></i>
    <i class="tool"><svg viewBox="0 0 30 30"><path fill="#1aa5a8" stroke="#045" stroke-width="1.300" d="M10 17h17l-8 10H2z"/><path d="M8 20h17M6 23h17M15 17L8 27M21 17l-8 10" stroke="#056a70"/><path d="M15 6v15" stroke="#e8b020" stroke-width="1.600" stroke-dasharray="3 1"/><path fill="none" stroke="#5a28b8" stroke-width="1.300" d="M9 8l6-6 6 6M13 6h4v3h-4z"/></svg></i>
    <i class="tool"><svg viewBox="0 0 30 30"><path fill="#667" d="M7 6h21v22H7z"/><path fill="#0ce8fa" stroke="#0a28a8" stroke-width="1.300" d="M5 3h19v20H5z"/><path fill="#a070f0" d="M15 4h8v8h-8z"/><path d="M14.500 3v20M5 13h19" stroke="#0a28a8" stroke-width="1.500"/></svg></i>
    <i class="tool drop"><svg viewBox="0 0 30 30"><path fill="#47b5fa" stroke="#1024c0" stroke-width="1.400" d="M3 8l7-6h17v18l-7 7H3z"/><path fill="#4ce0fa" stroke="#1024c0" stroke-width="1.400" d="M3 8h17v19H3z"/><path d="M20 8l7-6" stroke="#1024c0" stroke-width="1.400"/></svg></i>
    <i class="tool drop boxed p2"><svg viewBox="0 0 30 30"><path fill="#fdf4a8" d="M20 5h6v21h-5z"/><path fill="url(#blue)" stroke="#012" stroke-width="1.300" d="M6 5c3-4 14-4 17 0v19c-3 4-14 4-17 0z"/><ellipse cx="14.500" cy="5" rx="8.500" ry="3" fill="#48e8fa" stroke="#012"/></svg></i>
    <i class="tool p2"><svg viewBox="0 0 30 30"><path fill="#fff" stroke="#124" stroke-width="1.300" d="M4 4h21v22H4z"/><path fill="#4ad8f4" d="M6 6h17v18H6z"/><path fill="#fde79a" stroke="#886" d="M9 10l5-4 8 2-1 6-8 2-4-2z"/><path fill="#fff6b8" stroke="#124" d="M6 20l5-4 8 1-5 6H8z"/><path fill="#057" d="M14 20l6-3-2 5-5 2z"/></svg></i>
    <i class="tool"><svg viewBox="0 0 30 30"><path fill="#fff" stroke="#124" stroke-width="1.300" d="M4 4h21v22H4z"/><path fill="#4ad8f4" d="M6 6h17v18H6z"/><path fill="#fff6b8" stroke="#124" d="M6 20l5-4 8 1-5 6H8z"/><path fill="#057" d="M14 20l6-3-2 5-5 2z"/></svg></i>
  </div>
  <div class="group grip">
    <i class="tool"><svg viewBox="0 0 30 30"><path d="M3 7h24M8 2L3 7l5 5M22 2l5 5-5 5" fill="none" stroke="#1a1a90" stroke-width="1.800"/><path fill="#fcc6b4" stroke="#3a1a50" stroke-width="1.500" d="M3 16h24v10H3z"/><path d="M6 17v4M10 17v5M14 17v4M18 17v5M22 17v4" stroke="#3a1a50"/></svg></i>
    <i class="tool p2"><svg viewBox="0 0 30 30"><path fill="#555" stroke="#222" d="M12 2h13v5h-3v10h4v6h-2v5h-5v-5h-8v-4h5V8h-4z"/><circle cx="10" cy="13" r="5" fill="#2e9670" stroke="#123"/><circle cx="9" cy="11" r="1.500" fill="#dff"/></svg></i>
  </div>
  <div class="group grip">
    <i class="tool p1"><svg viewBox="0 0 30 30"><path fill="#fff" d="M4 2l20 8v17L4 16z"/><path d="M5 2v15M8 3v15M11 5v12M14 6v12M17 7v14M20 9v15M23 10v17M4 2l20 9" stroke="#a03020" stroke-width="1.500"/><path d="M15 6c6-4 12-1 12 6M4 17c6-5 14-4 16 7" fill="none" stroke="#1468e0" stroke-width="2"/><path fill="#4ae0f0" stroke="#1238a0" d="M2 22l4-7c6-2 13 2 15 9l-4 3c-3-6-8-8-12-6z"/></svg></i>
  </div>
  <div class="group sep">
    <i class="tool drop boxed"><svg viewBox="0 0 30 30"><path fill="#5fe5ee" stroke="#01262e" stroke-width="1.600" d="M6 8l3-6h16v10l-3 6H6z"/><path fill="#c8fafa" stroke="#01262e" d="M9 5h13l-5 9H5z"/><path d="M11 8h7M10 11h7" stroke="#01262e"/><path fill="#fff6b0" stroke="#01262e" d="M22 4h3l-5 10-4 1z"/><path fill="#c8fafa" stroke="#067" stroke-width="1.500" d="M4 17h21l3-2-4 6H4l-3-3z"/><path fill="#24aab5" stroke="#01262e" stroke-width="1.500" d="M7 21h16v5l-3 1H7z"/></svg></i>
    <i class="tool drop p2"><svg viewBox="0 0 30 30"><path fill="#38d2e2" stroke="#01262e" stroke-width="1.600" d="M6 6l3-4h16v12l-3 5H6z"/><path d="M6 6h16l3-4M22 6v12" fill="none" stroke="#01262e"/><path fill="#5fe5ee" stroke="#067" stroke-width="1.500" d="M4 17h18l6-3-4 7H4l-3-2z"/><path fill="#24aab5" stroke="#01262e" stroke-width="1.500" d="M7 21h15v5l-3 1H7z"/></svg></i>
  </div>
  <div class="group sep palette">
    <i class="tool"><svg viewBox="0 0 30 30"><path d="M4 4h16M24 10v17" stroke="#f6ee20" stroke-width="4"/><path d="M3 1v6M20 1v6M4 4h16M22 9h6M22 27h6M25 10v16" stroke="#111" stroke-width="1.500"/><circle cx="11" cy="19" r="8" fill="#e020c0" stroke="#111" stroke-width="1.500"/><path fill="#20b830" d="M11 19V11a8 8 0 0 0-8 6z"/><path fill="#f0e020" d="M11 19l7-5a8 8 0 0 0-7-3z"/><path fill="#1848e0" d="M11 19l7-5a8 8 0 0 1 0 9z"/><path fill="#e82020" d="M11 19l-8-2a8 8 0 0 0 5 9z"/><circle cx="11" cy="19" r="2.500" fill="#111"/></svg></i>
    <i class="tool p5"><svg viewBox="0 0 30 30"><path d="M6 9V2M6 5h16M22 2v6M21 8c4 0 4 1 4 4v14M21 26h8M2 13h10M14 26h5" fill="none" stroke="#f47d14" stroke-width="1.600"/><path fill="#f47d14" d="M6 5l5-3v6zM22 5l-5-3v6zM25 8l-3 5h6zM25 26l-3-5h6zM1 21l3-3h8v7l-3 3H1z"/><path fill="#fed" d="M3 22h4v3H3z"/></svg></i>
    <i class="tool"><svg viewBox="0 0 30 30"><path d="M5 4l5 4M8 1l6 7M13 2l4 6 6-6M4 10l7 3 4-4M18 9l9-6M15 13l12 4M14 17l12 9M19 14v13M26 8l-7 8M27 20l-9 7M13 12v7M23 6v17" fill="none" stroke="#f47d14" stroke-width="1.900"/><path fill="#f47d14" d="M1 21l3-3h9v7l-3 3H1z"/><path fill="#fed" d="M3 22h4v3H3z"/></svg></i>
  </div>
  <div class="group grip product">
    <i class="tool"><svg viewBox="0 0 30 30"><path fill="#bfe0f4" stroke="#1430b0" stroke-width="1.300" d="M3 3h10v4H3zM19 17h9v5h-9z"/><path d="M8 7v7h5M15 20h4" fill="none" stroke="#1430b0" stroke-width="1.300"/><path fill="#b81828" d="M16 8l-5 9 4 1-4 9 10-12h-4z"/></svg></i>
    <i class="tool"><svg viewBox="0 0 30 30"><path fill="#8ed8f0" stroke="#1430b0" stroke-width="1.300" d="M10 2h10v4H10zM10 9h10v4H10zM10 22h10v4H10z"/><path d="M10 16h10M10 19h10" stroke="#1430b0"/></svg></i>
    <i class="tool p2"><svg viewBox="0 0 30 30"><path d="M14 6H5v18h6" fill="none" stroke="#111" stroke-width="4.500"/><path d="M14 6H5v18h6" fill="none" stroke="#ffe020" stroke-width="2.500"/><path fill="#8ed8f0" stroke="#1430b0" stroke-width="1.200" d="M12 4h13v3H12z"/><path fill="#fff" stroke="#222" stroke-width="1.300" d="M11 6l12 12h-5l4 7-4 2-4-8-4 4z"/></svg></i>
    <i class="tool m1"><svg viewBox="0 0 30 30"><path d="M12 3H4v19h7" fill="none" stroke="#111" stroke-width="3.600"/><path d="M12 3H4v19h7" fill="none" stroke="#ffe020" stroke-width="1.900"/><path fill="#ffe020" stroke="#111" d="M9 18l5 4-5 4z"/><path fill="#8ed8f0" stroke="#111" stroke-width="1.400" d="M12 2h11v4H12zM10 10h12v4H10z"/><path fill="#d0d0dc" stroke="#111" stroke-width="1.500" d="M16 22h5v-4h6v8H16z"/></svg></i>
    <i class="tool drop p1"><svg viewBox="0 0 30 30"><path fill="#fff" stroke="#111" stroke-width="1.800" d="M2 3h23l3 22H2z"/><path d="M9 8l-3 3v4l-2 3 4 3" fill="none" stroke="#222" stroke-dasharray="3 1"/><path fill="#666" stroke="#333" d="M14 1h9v25h-9z"/><circle cx="18.500" cy="5.500" r="3.300" fill="#b01018"/><circle cx="18.500" cy="12" r="3" fill="#fd1"/><circle cx="18.500" cy="19" r="3.300" fill="#078a88"/></svg></i>
  </div>
  <div class="brand"><svg viewBox="0 0 40 32"><path d="M12 2c8-2 8 3 2 6" fill="none" stroke="#d83040" stroke-width="2.200"/><path d="M5 11c9 0 8 11-3 12l4-9" fill="none" stroke="#3a3a80" stroke-width="2"/><path d="M21 9c-8 1-6 4-3 6s2 6-5 7" fill="none" stroke="#eda020" stroke-width="2.200"/><text x="7" y="31">CATIA</text></svg></div>
</div>

<footer class="status">
  <span class="msg">Crée un composant Sortie.</span>
  <span class="cmd">c:Composant Sortie</span>
  <span class="field"><span class="tip">Composant Sortie</span></span>
  <span class="sb"><svg viewBox="0 0 20 20"><path d="M5 4h8v7H5zM14 14h3v3h-3z" fill="none" stroke="#fff" stroke-width="3"/><path d="M5 4h8v7H5zM14 14h2M2 17h15V3" fill="none" stroke="#a8a8b8" stroke-width="1.500"/></svg></span>
  <span class="sb"><svg viewBox="0 0 20 20"><circle cx="10" cy="9" r="6" fill="none" stroke="#fff" stroke-width="3"/><circle cx="10" cy="9" r="6" fill="none" stroke="#a8a8b8" stroke-width="1.500"/><path d="M10 5v1M10 8v5M8 13h4M3 17h15V5" stroke="#a8a8b8" fill="none" stroke-width="1.700"/></svg></span>
</footer>
<script src="sketch.js"></script>
</body>
</html>
```
FILE: styles.css
```css
* { box-sizing: border-box; }
html, body { margin: 0; height: 100%; overflow: hidden; }
body {
  display: grid;
  grid-template-rows: 22px 19px 46px minmax(0, 1fr) 46px 24px;
  width: 1920px;
  height: 1039px;
  background: #cfcfe7;
  color: #16161e;
  font: 12px/16px "Open Sans", "Noto Sans", sans-serif;
}
.defs { position: absolute; width: 0; height: 0; }
svg { display: block; flex: none; }

.titlebar { display: flex; align-items: center; background: #fff; padding-left: 3px; }
.applogo { width: 14px; height: 14px; }
.title { margin-left: 6px; letter-spacing: -.42px; white-space: nowrap; }
.winbtns { width: 110px; height: 22px; margin-left: auto; margin-right: 12px; }

.menubar { display: flex; align-items: center; letter-spacing: -.32px; }
.menulogo { width: 19px; height: 16px; margin: 0 2px 0 1px; }
.menu { padding: 0 12px; line-height: 19px; white-space: nowrap; }
.menu.active { padding: 0 6px; width: 62px; background: #fde3bb; letter-spacing: -.5px; }
.menu.enovia { padding: 0 2px 0 7px; letter-spacing: -.4px; width: 95px; }
.docbtns { display: flex; gap: 2px; margin-left: auto; margin-right: 2px; }
.docbtns svg { width: 17px; height: 17px; background: #fff; border: 1px solid #dde; }

.toolbar {
  display: grid;
  background: linear-gradient(#fff 0, #f3f3fb 4px, #d6d6ea 9px, #cfcfe7 14px, #cfcfe7 33px, #b6b6c9 40px, #9c9cac 44px, #4c4c58 45px, #4c4c58 46px);
}
.top { grid-template-columns: 157px 1000px 85px 116px 350px 1fr; padding-left: 5px; }
.bottom { grid-template-columns: 384px 266px 474px 91px 49px 83px 146px 374px 1fr; padding-left: 5px; background: linear-gradient(#fff 0, #fff 4px, #dedef0 9px, #cfcfe7 14px, #cfcfe7 33px, #b6b6c9 40px, #9c9cac 44px, #4c4c58 45px, #4c4c58 46px); }
.group { display: flex; align-items: center; min-width: 0; }
.bottom .group { padding-top: 2px; }
.grip::before { content: ""; flex: none; width: 3px; height: 20px; margin: -18px 0 0 1px; border-left: 1px solid #fff; border-right: 1px solid #8c8c9c; background: #e8e8f2; }
.grip .tool:first-of-type { margin-left: 5px; }
.sep { border-left: 2px solid #f8f8ff; box-shadow: -1px 0 #9c9cae; margin: 2px 0 1px; }
.sep .tool:first-of-type { margin-left: 4px; }
.lead .tool:first-of-type { margin-left: 7px; }
.top .lead .tool:first-of-type { margin-left: 9px; }
.gridset .tool:first-of-type { margin-left: 7px; }
.orange .tool:first-of-type { margin-left: 8px; }
.ops .tool:first-of-type { margin-left: 9px; }
.product .tool:first-of-type { margin-left: 4px; }
.palette .tool:first-of-type { margin-left: 5px; }
.tool { position: relative; flex: none; width: 30px; height: 30px; margin-left: 6px; }
.tool > svg { width: 30px; height: 30px; }
.m1 { margin-left: 5px; } .m2 { margin-left: 3px; } .m4 { margin-left: 2px; }
.p1 { margin-left: 7px; } .p2 { margin-left: 8px; } .p5 { margin-left: 11px; }
.drop::after { content: ""; position: absolute; right: -5px; bottom: -3px; border: 4px solid transparent; border-top: 5px solid #000; border-bottom: 0; }
.boxed::before { content: ""; position: absolute; right: -6px; bottom: -4px; width: 10px; height: 7px; background: #fff; }
.fx { font: italic 25px "Liberation Serif", serif; }
.fxs { font: 14px "Liberation Sans", sans-serif; letter-spacing: -.8px; stroke: #111; stroke-width: .4px; }
.brand svg { width: 42px; height: 34px; }
.brand text { font: italic bold 9.5px "Liberation Sans", sans-serif; fill: #33337c; }

.work { display: grid; grid-template-columns: 22px 1852px 46px; min-height: 0; border-top: 1px solid #5b6c78; }
.scroll { display: grid; grid-template-rows: 20px 236px 1fr 21px; padding-left: 2px; background: #8c8c8c; }
.sbtn, .thumb { background: #7b79fb; border: 1px solid #3d3ca8; border-left-color: #a6a5ff; border-top-color: #a6a5ff; }
.sbtn svg { width: 18px; height: 18px; }
.track { background: repeating-conic-gradient(#5b76e8 0 25%, #2f5cc0 0 50%) 0 0 / 2px 2px; }

.canvas { position: relative; overflow: hidden; min-height: 0; background: linear-gradient(#0072ac 0, #0575af 20%, #127eb3 52%, #1c83b5 68%, #3d95bf 76%, #79b4d3 91%, #9ac9dd 100%); }
.scene { position: absolute; top: 0; left: 0; width: 1852px; height: 881px; }
.axis text { font: 14px "Liberation Sans", sans-serif; fill: #c8dc28; }
.white text { fill: #fff; font-size: 13px; }
.compass text { font: 14px "Liberation Sans", sans-serif; fill: #e3fa30; }

.tree { position: relative; width: 420px; margin-top: -12px; color: #e9fbff; font: 13.5px/22px "Noto Sans", "Open Sans", sans-serif; }
.branches { position: absolute; left: 0; top: 0; width: 420px; height: 614px; }
.row { position: relative; display: flex; align-items: center; height: 27.86px; white-space: nowrap; }
.d0 { padding-left: 2px; } .d1 { padding-left: 22px; } .d2 { padding-left: 42px; } .d3 { padding-left: 62px; } .d4 { padding-left: 82px; }
.tg { width: 12px; height: 12px; margin-right: 6px; }
.leaf::before { content: ""; width: 18px; flex: none; }
.ic { width: 23px; height: 23px; margin-right: 1px; }
.row span { padding: 0 2px; background: #0273aa; letter-spacing: -.26px; }
.row .edit { background: #0e62f4; border: solid #fff; border-width: 1px 0 0 1px; box-shadow: 1px 1px #8a3040; line-height: 18px; padding: 0 0 0 1px; margin-left: 1px; }
.row .under { line-height: 18px; text-decoration: underline; text-underline-offset: 2px; }
.row .hot { background: #fb7d08; line-height: 20px; border-radius: 2px; }
.row.bare span { margin-left: 16px; }

.side { background: linear-gradient(90deg, #fff 0, #fff 4px, #dedef0 8px, #cfcfe7 13px, #cfcfe7 38px, #aaaabd 46px); }
.vgroup { display: flex; flex-direction: column; align-items: flex-start; padding: 4px 0 0 8px; }
.vgroup::before { content: ""; flex: none; width: 20px; height: 2px; margin-left: -4px; background: #fff; border-bottom: 1px solid #999aaa; }
.vgroup .tool { margin: 6px 0 0; }
.vgroup .p1 { margin-top: 7px; } .vgroup .p2 { margin-top: 8px; }
.g1 { height: 93px; } .g2 { height: 89px; } .g3 { height: 56px; } .g4 { height: 231px; }
.g1 .tool:first-of-type { margin-top: 9px; }
.g2 .tool:first-of-type, .g3 .tool:first-of-type { margin-top: 8px; }
.g4 .tool:first-of-type, .g5 .tool:first-of-type { margin-top: 7px; }
.vgroup .drop::after { right: -5px; bottom: -2px; border-width: 5px 5px 0; }

.status { display: flex; align-items: center; padding: 1px 0 2px 3px; letter-spacing: -.22px; white-space: nowrap; }
.msg { width: 1442px; }
.cmd { width: 106px; }
.field { position: relative; width: 299px; height: 19px; background: #fff; border: 1px solid #77778a; border-right-color: #fff; }
.tip { position: absolute; left: -4px; top: -2px; width: 102px; height: 20px; padding: 1px 3px; background: #ffffe1; border: 1px solid #555; letter-spacing: -.27px; }
.sb { display: grid; place-items: center; width: 32px; height: 20px; margin-left: 2px; border: 1px solid; border-color: #9a9aaa #fff #fff #9a9aaa; }
.sb svg { width: 17px; height: 17px; }
```
FILE: sketch.js
```js
// Hexagonal cell grid: column pitch and half-row pitch in pixels.
const NS = 'http://www.w3.org/2000/svg';
const X = c => 748.9 + 48.15 * c;
const Y = r => 211.2 + 27.79 * r;

function add(id, name, attrs) {
  const el = document.createElementNS(NS, name);
  for (const k in attrs) el.setAttribute(k, attrs[k]);
  document.getElementById(id).appendChild(el);
}

for (let c = 0; c < 7; c++) {
  for (let r = (c + 1) % 2; r < 25; r += 2) {
    add('holes', 'circle', { cx: X(c), cy: Y(r), r: 24.8 });
  }
}

const left = dy => [[0, 3], [1, 4], [2, 3], [3, 4], [0, 7], [1, 8], [2, 7], [3, 8]].map(([c, r]) => [c, r + dy]);
const right = (top, h) => [[4, top + 1], [5, top], [6, top + 1], [6, top + h + 1], [5, top + h], [4, top + h + 1]];

const loops = [
  [[1, 0], [5, 0], [6, 1], [6, 3], [5, 2], [4, 3], [2, 1], [1, 2], [0, 1]],
  [[0, 21], [1, 22], [2, 23], [3, 22], [2, 21], [1, 22], [0, 23]],
  right(4, 6), right(12, 6), right(20, 2)
];
const opens = [left(0), left(6), left(12), [[5, 4], [5, 10]], [[5, 12], [5, 18]]];
for (const dy of [0, 6, 12]) {
  opens.push([[0, 3 + dy], [0, 7 + dy]], [[3, 4 + dy], [3, 8 + dy]]);
  add('wires', 'path', { d: `M${X(0)} ${Y(3 + dy)}L${X(3)} ${Y(8 + dy)}`, 'stroke-width': 1.3 });
}

const path = pts => 'M' + pts.map(([c, r]) => `${X(c)} ${Y(r)}`).join('L');
loops.forEach(p => add('wires', 'path', { d: path(p) + 'z' }));
opens.forEach(p => add('wires', 'path', { d: path(p) }));

const seen = new Set();
for (const [c, r] of [...loops, ...opens].flat()) {
  const key = c + ',' + r;
  if (seen.has(key)) continue;
  seen.add(key);
  add('marks', 'use', { href: '#node', x: X(c) + 1.3, y: Y(r) - 13.8, width: 12.6, height: 12.6 });
  add('points', 'rect', { x: X(c) - 1.5, y: Y(r) - 1.5, width: 3, height: 3 });
}
add('marks', 'circle', { cx: X(5) + 7.5, cy: Y(10) - 7.5, r: 2.6, fill: '#a6a5cb', stroke: '#053a08' });
add('marks', 'use', { href: '#node', x: X(5) + 17.3, y: Y(10) - 13.8, width: 12.6, height: 12.6 });

[[0, 19], [2, 19], [3, 20], [6, 23]].forEach(([c, r]) => add('rings', 'circle', { cx: X(c), cy: Y(r), r: 24.8 }));
```
